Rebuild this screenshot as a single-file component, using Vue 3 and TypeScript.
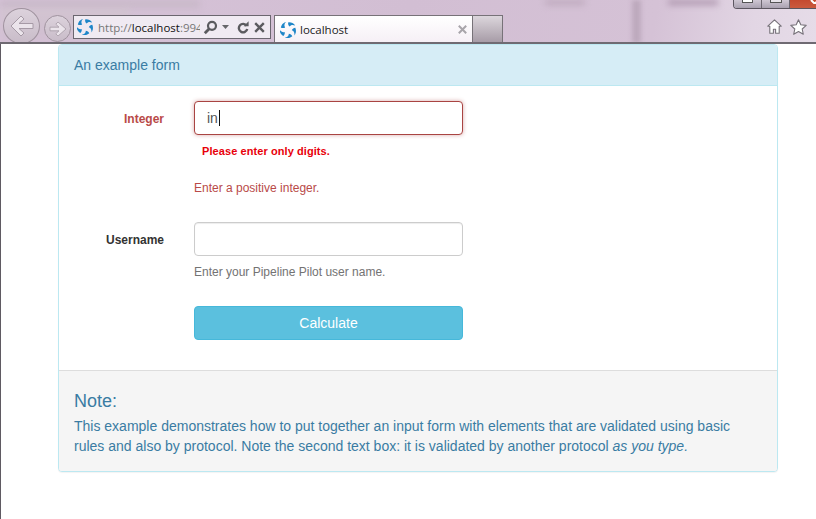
<script setup lang="ts">
const blades: number[] = [0, 72, 144, 216, 288];
</script>

<template>
  <div class="page">
    <header class="chrome">
      <div class="smear s1"></div>
      <div class="smear s2"></div>
      <div class="smear s3"></div>
      <div class="smear s4"></div>
      <div class="smear s5"></div>
      <div class="wincontrols">
        <span class="wc"><i class="min"></i></span>
        <span class="wc"><i class="max"></i></span>
        <span class="wc close"><svg width="10" height="4" viewBox="0 0 10 4"><path d="M1 0 4.5 3.5M8.5 0 5 3.5" stroke="#fff" stroke-width="2" fill="none"/></svg></span>
      </div>
      <div class="navbtns">
        <span class="nav back">
          <svg width="28" height="24" viewBox="0 0 28 24"><path d="M13 2 3 12l10 10 3-3L11 14.500h14v-5H11l5-4.500Z" fill="#ebe4eb" stroke="#a69aa6" stroke-width="1" stroke-linejoin="round"/></svg>
        </span>
        <span class="nav fwd">
          <svg width="18" height="16" viewBox="0 0 18 16"><path d="M9 1l8 7-8 7-2.200-2.200 3.200-3H1V6.200h9l-3.200-3Z" fill="#ebe4eb" stroke="#a69aa6" stroke-width=".8" stroke-linejoin="round"/></svg>
        </span>
      </div>
      <div class="addr">
        <svg class="logo" width="16" height="16" viewBox="0 0 16 16">
          <path v-for="b in blades" :key="b" :transform="`rotate(${b} 8 8)`" d="M8.200 .4C11 .1 13.600 1.300 15.200 3.600 13 2.500 10.800 2.700 9.500 4.500 8.500 3.500 7.800 1.900 8.200 .4Z" fill="#1f86c8"/>
        </svg>
        <span class="url"><span class="dim">http://</span><b>localhost</b><span class="dim">:994</span></span>
        <svg class="tool" width="15" height="15" viewBox="0 0 15 15"><circle cx="9" cy="5.800" r="4" fill="none" stroke="#5b5b5f" stroke-width="2.200"/><path d="M6.200 8.800 1.800 13.200" stroke="#5b5b5f" stroke-width="2.800"/></svg>
        <svg class="caret" width="7" height="4" viewBox="0 0 7 4"><path d="M0 0h7L3.500 4Z" fill="#66666a"/></svg>
        <svg class="reload" width="12" height="13" viewBox="0 0 12 13"><path d="M9.600 4.800A4.200 4.200 0 1 0 10.200 8" fill="none" stroke="#5b5b5f" stroke-width="2.400"/><path d="M6.600 5.200h5V.2Z" fill="#5b5b5f"/></svg>
        <svg class="stop" width="11" height="11" viewBox="0 0 11 11"><path d="M1.200 1.200l8.600 8.600M9.800 1.200l-8.600 8.600" stroke="#5b5b5f" stroke-width="2.400"/></svg>
      </div>
      <div class="tab">
        <svg class="logo tablogo" width="16" height="16" viewBox="0 0 16 16">
          <path v-for="b in blades" :key="b" :transform="`rotate(${b} 8 8)`" d="M8.200 .4C11 .1 13.600 1.300 15.200 3.600 13 2.500 10.800 2.700 9.500 4.500 8.500 3.500 7.800 1.900 8.200 .4Z" fill="#1f86c8"/>
        </svg>
        <span class="tabtitle">localhost</span>
        <svg class="tabx" width="9" height="9" viewBox="0 0 9 9"><path d="M.8.8l7.400 7.400M8.200.8 .8 8.200" stroke="#a8a5aa" stroke-width="2"/></svg>
      </div>
      <div class="newtab"></div>
      <div class="spring"></div>
      <div class="tools">
        <svg width="15" height="15" viewBox="0 0 15 15"><path d="M7.500.8.800 7.200h2v7h3.600v-4h2.200v4h3.600v-7h2Z" fill="#fff" stroke="#77727a" stroke-width="1.100" stroke-linejoin="round"/></svg>
        <svg width="17" height="16" viewBox="0 0 17 16"><path d="M8.500.8l2.300 5 5.400.6-4 3.600 1.100 5.300-4.800-2.700-4.800 2.700 1.100-5.300-4-3.600 5.400-.6Z" fill="#fff" stroke="#77727a" stroke-width="1.100" stroke-linejoin="round"/></svg>
      </div>
    </header>

    <main class="viewport">
      <section class="panel">
        <div class="panel-head">An example form</div>
        <form class="panel-body" @submit.prevent>
          <div class="row has-error">
            <label class="label" for="integer">Integer</label>
            <div class="field">
              <div class="input error-input">in<span class="cursor"></span></div>
              <div class="errmsg">Please enter only digits.</div>
              <p class="help">Enter a positive integer.</p>
            </div>
          </div>
          <div class="row second">
            <label class="label" for="username">Username</label>
            <div class="field">
              <div class="input" id="username"></div>
              <p class="help grey">Enter your Pipeline Pilot user name.</p>
            </div>
          </div>
          <div class="row third">
            <div class="label"></div>
            <div class="field">
              <button class="btn" type="button">Calculate</button>
            </div>
          </div>
        </form>
        <footer class="panel-foot">
          <h4>Note:</h4>
          <p>This example demonstrates how to put together an input form with elements that are validated using basic rules and also by protocol. Note the second text box: it is validated by another protocol <em>as you type.</em></p>
        </footer>
      </section>
    </main>
  </div>
</template>

<style>
html, body { margin: 0; background: #fff; }
</style>

<style scoped>
.page {
  width: 816px;
  height: 519px;
  overflow: hidden;
  font-family: "Liberation Sans", Arial, sans-serif;
  background: #fff;
  color: #333;
}
.chrome {
  position: relative;
  height: 44px;
  box-sizing: border-box;
  display: flex;
  align-items: flex-start;
  background: linear-gradient(100deg, #d6c3d8 0%, #d2bed3 50%, #d5c2d6 80%, #e2d6e4 92%, #e6dce8 100%);
  border-bottom: 2px solid #6f6a72;
  overflow: hidden;
}
.smear { position: absolute; filter: blur(3px); }
.s1 { left: 0; top: 0; width: 200px; height: 8px; background: #c9b9c9; }
.s2 { left: 632px; top: 0; width: 9px; height: 43px; background: #bda9bd; filter: blur(2px); }
.s3 { left: 668px; top: 0; width: 50px; height: 5px; background: #ad95ad; }
.s4 { left: 545px; top: 0; width: 40px; height: 5px; background: #bda8bc; }
.s5 { left: 0; top: 8px; width: 130px; height: 34px; background: linear-gradient(#d0c6cc, #cfbccf); opacity: .6; }
.wincontrols {
  position: absolute;
  top: 0;
  left: 733px;
  right: -2px;
  height: 9px;
  display: flex;
  border: 1px solid #5c5660;
  border-top: 0;
  border-radius: 0 0 0 4px;
  box-sizing: border-box;
  overflow: hidden;
}
.wc {
  width: 27px;
  flex: none;
  border-right: 1px solid #6c6670;
  box-sizing: content-box;
  background: linear-gradient(#cfc7d3, #a9a1b0);
  display: flex;
  justify-content: center;
  align-items: flex-start;
}
.wc i { display: block; box-sizing: border-box; }
.min { width: 11px; height: 3px; background: #fff; border: 1px solid #555; border-top: 0; }
.max { width: 12px; height: 3px; background: #e8e4ea; border: 1px solid #555; border-top: 0; }
.wc.close { background: linear-gradient(#c44a30, #cb5a3e); width: 30px; border: 0; justify-content: flex-end; padding-right: 2px; }
.navbtns { display: flex; align-items: flex-start; margin-top: 8px; margin-left: 3px; height: 35px; flex: none; position: relative; }
.nav {
  border-radius: 50%;
  border: 1px solid #a0939f;
  box-sizing: border-box;
  display: flex;
  align-items: center;
  justify-content: center;
  background: linear-gradient(#dcd2dc, #c9bcc9);
}
.back { width: 37px; height: 36px; }
.fwd { width: 27px; height: 27px; margin-left: 4px; margin-top: 7px; }
.addr {
  position: relative;
  flex: none;
  margin-top: 15px;
  margin-left: 2px;
  width: 198px;
  height: 24px;
  box-sizing: border-box;
  border: 1px solid #6b666f;
  background: #f0eaf2;
  display: flex;
  align-items: center;
  padding-left: 3px;
}
.logo { flex: none; }
.url { width: 102px; flex: none; overflow: hidden; white-space: nowrap; margin-left: 5px; font-size: 11.5px; font-family: "Open Sans", "Liberation Sans", sans-serif; color: #111; }
.url b { font-weight: 400; }
.dim { color: #777; }
.tool { margin-left: 3px; flex: none; }
.caret { margin-left: 4px; flex: none; }
.reload { margin-left: 8px; flex: none; }
.stop { margin-left: 5px; flex: none; }
.tab {
  position: relative;
  flex: none;
  margin-top: 15px;
  margin-left: 3px;
  width: 199px;
  height: 27px;
  box-sizing: border-box;
  border: 1px solid #777278;
  border-bottom: 0;
  background: linear-gradient(#fff, #f6f0f6);
  display: flex;
  align-items: center;
  padding-left: 5px;
}
.tablogo { margin-top: 1px; }
.tabtitle { margin-left: 4px; font-size: 11.5px; font-family: "Open Sans", "Liberation Sans", sans-serif; color: #222; }
.tabx { margin-left: auto; margin-right: 5px; }
.newtab {
  flex: none;
  margin-top: 15px;
  width: 30px;
  height: 27px;
  box-sizing: border-box;
  border: 1px solid #777278;
  border-left: 0;
  border-bottom: 0;
  background: linear-gradient(#dcd6dc, #a79ca7);
}
.spring { flex: 1; }
.tools { position: relative; display: flex; gap: 8px; margin-top: 19px; margin-right: 9px; }

.viewport {
  height: 475px;
  box-sizing: border-box;
  border-left: 1px solid #5f5a62;
  padding: 0 38px 0 57px;
}
.panel {
  width: 720px;
  box-sizing: border-box;
  border: 1px solid #bce8f1;
  border-radius: 4px;
  box-shadow: 0 1px 1px rgba(0, 0, 0, .05);
  overflow: hidden;
  background: #fff;
}
.panel-head {
  height: 41px;
  line-height: 41px;
  box-sizing: border-box;
  padding-left: 15px;
  border-bottom: 1px solid #bce8f1;
  color: #3a7ca3;
  font-size: 14px;
  background: #d6edf6;
}
.panel-body { padding: 15px 0 0; height: 284px; box-sizing: border-box; }
.row { display: flex; }
.label {
  width: 105px;
  flex: none;
  text-align: right;
  font-size: 12px;
  font-weight: 700;
  padding-top: 11px;
  line-height: 14px;
  color: #333;
}
.has-error .label { color: #b94a48; }
.field { margin-left: 30px; width: 269px; }
.input {
  height: 34px;
  box-sizing: border-box;
  border: 1px solid #ccc;
  border-radius: 4px;
  background: #fff;
  padding: 0 12px;
  font-size: 14px;
  line-height: 32px;
  color: #555;
  display: flex;
  align-items: center;
  box-shadow: inset 0 1px 1px rgba(0, 0, 0, .075);
}
.error-input { border-color: #a94442; box-shadow: 0 0 4px rgba(169, 68, 66, .45); }
.cursor { display: inline-block; width: 1px; height: 16px; background: #111; margin-left: 1px; }
.errmsg {
  margin: 10px 0 0 8px;
  height: 13px;
  font-size: 11px;
  line-height: 13px;
  font-weight: 700;
  color: #e8000a;
  letter-spacing: .08px;
}
.help { margin: 23px 0 0; font-size: 12px; line-height: 14px; color: #b94a48; }
.help.grey { margin-top: 9px; color: #737373; }
.second { margin-top: 27px; }
.third { margin-top: 27px; }
.btn {
  display: block;
  width: 269px;
  height: 34px;
  box-sizing: border-box;
  border: 1px solid #46b8da;
  border-radius: 4px;
  background: #5bc0de;
  color: #fff;
  font: 14px "Liberation Sans", Arial, sans-serif;
  padding: 0;
}
.panel-foot {
  height: 101px;
  box-sizing: border-box;
  background: #f5f5f5;
  border-top: 1px solid #ddd;
  padding: 20px 15px 0;
  color: #3a7ca3;
}
.panel-foot h4 { margin: 0; font-size: 18px; line-height: 20px; font-weight: 400; }
.panel-foot p { margin: 5px 0 0; font-size: 14px; line-height: 20px; }
</style>
